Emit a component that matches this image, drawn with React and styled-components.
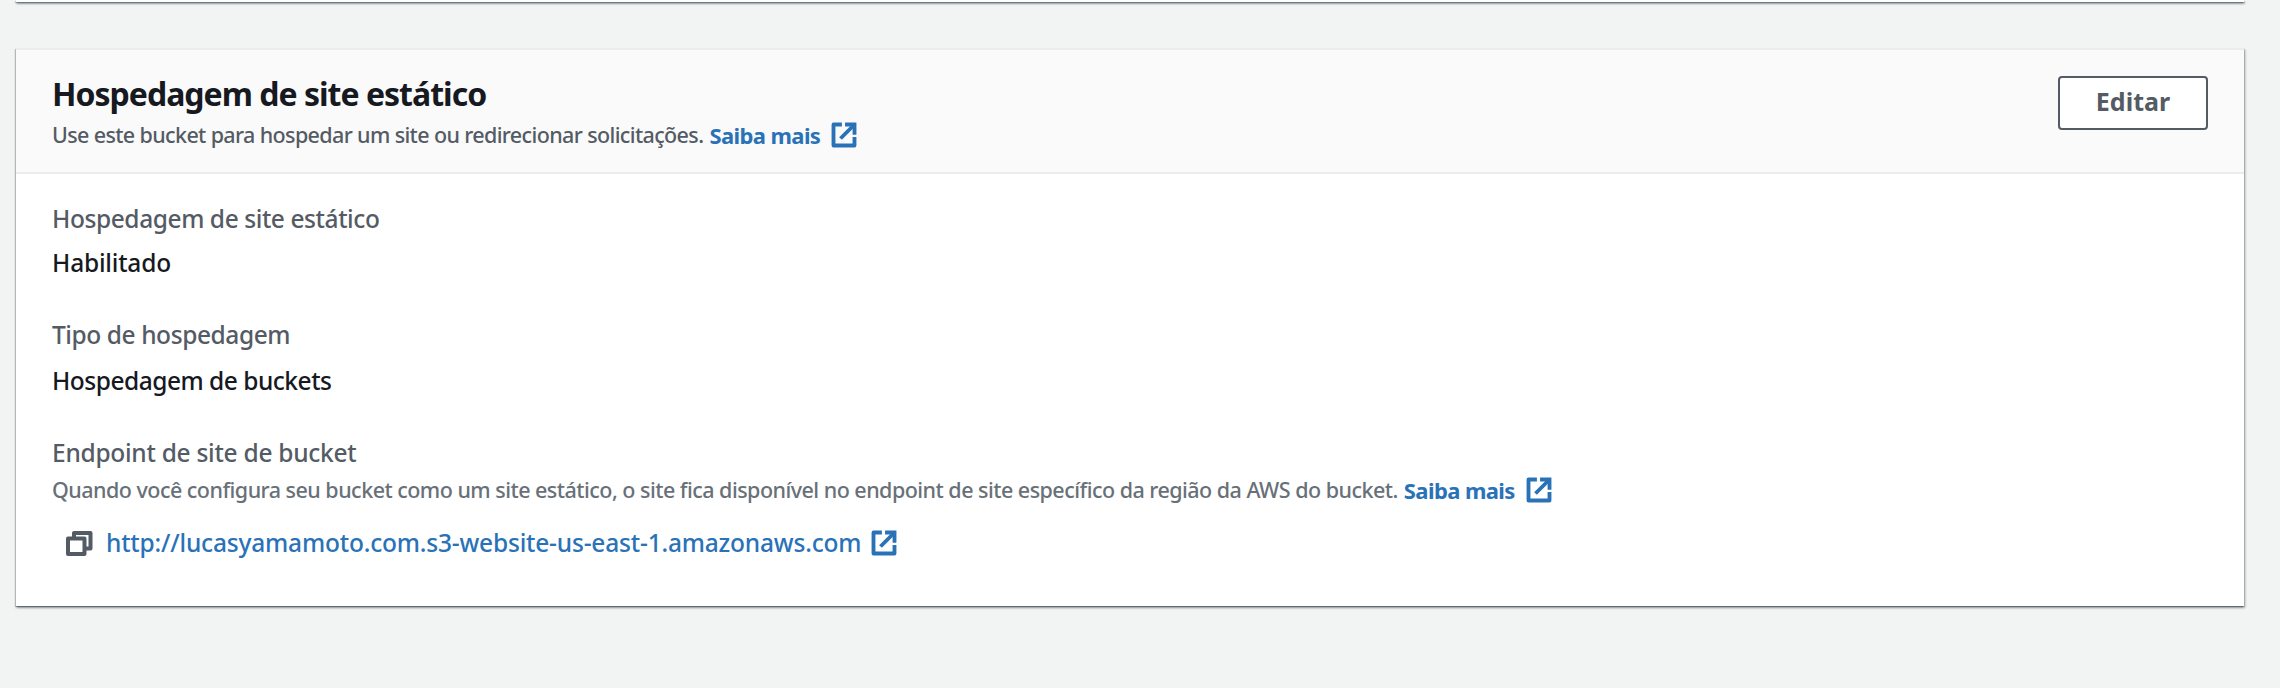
import React from 'react';
import styled, { createGlobalStyle } from 'styled-components';

const GlobalStyle = createGlobalStyle`
  * { box-sizing: border-box; }
  body {
    margin: 0;
    background: #f2f3f3;
    color: #16191f;
    font-family: "Noto Sans", sans-serif;
    font-weight: 500;
  }
`;

const Page = styled.main`
  height: 688px;
  padding: 0 36px 0 16px;
  overflow: hidden;
  display: flex;
  flex-direction: column;
`;

const Card = styled.section`
  background: #fff;
  box-shadow: 0 2px 2px 0 rgba(0, 28, 36, 0.3), 2px 2px 2px 0 rgba(0, 28, 36, 0.12),
    -1px 1px 1px 0 rgba(0, 28, 36, 0.2), 1px 1px 1px 0 rgba(0, 28, 36, 0.15),
    0 1px 0 0 rgba(0, 28, 36, 0.12);
`;

const PreviousCard = styled(Card)`
  flex: none;
  height: 2px;
  margin-bottom: 46px;
`;

const Header = styled.header`
  display: flex;
  justify-content: space-between;
  align-items: flex-start;
  height: 126px;
  padding: 24px 36px 0;
  background: #fafafa;
  border-top: 2px solid #eaeded;
  border-bottom: 2px solid #eaeded;
`;

const Title = styled.h2`
  margin: 0;
  font-size: 32px;
  line-height: 40px;
  font-weight: 700;
  letter-spacing: -0.99px;
`;

const Description = styled.p`
  display: flex;
  align-items: center;
  margin: ${p => p.$top}px 0 0;
  height: 30px;
  font-size: 21.5px;
  line-height: 30px;
  letter-spacing: ${p => p.$spacing}px;
  white-space: nowrap;
  color: ${p => p.$color};
`;

const InfoLink = styled.a`
  display: flex;
  align-items: center;
  margin-left: 6px;
  gap: 10px;
  color: #2a72b8;
  font-weight: 700;
  font-size: 22px;
  letter-spacing: -0.6px;
`;

const EditButton = styled.button`
  width: 150px;
  height: 54px;
  margin-top: 2px;
  padding: 0 0 5px;
  border: 2px solid #545b64;
  border-radius: 4px;
  background: #fff;
  color: #545b64;
  font: 700 25px/36px "Noto Sans", sans-serif;
  letter-spacing: 0;
`;

const Body = styled.div`
  display: flex;
  flex-direction: column;
  gap: 36px;
  height: 432px;
  padding: 27px 36px 0;
`;

const Field = styled.div`
  display: flex;
  flex-direction: column;
`;

const Label = styled.div`
  font-size: 24.5px;
  line-height: 36px;
  letter-spacing: ${p => p.$spacing ?? -0.42}px;
  color: #545b64;
`;

const Value = styled.div`
  margin-top: ${p => p.$top}px;
  font-size: 24.5px;
  line-height: 36px;
  letter-spacing: ${p => p.$spacing}px;
`;

const Endpoint = styled.div`
  display: flex;
  align-items: center;
  height: 36px;
  margin-top: 20px;
  padding-left: 12px;
`;

const EndpointLink = styled.a`
  display: flex;
  align-items: center;
  gap: 9px;
  margin-left: 10px;
  color: #2a72b8;
  font-size: 24.5px;
  line-height: 36px;
  letter-spacing: -0.19px;
`;

const Icon = styled.svg`
  flex: none;
  fill: none;
  stroke: currentColor;
  stroke-width: 2.2;
  stroke-linejoin: round;
`;

const CopyGlyph = styled(Icon)`
  color: #545b64;
  stroke-width: 4;
`;

const ExternalIcon = () => (
  <Icon width="28" height="28" viewBox="0 0 16 16" aria-hidden="true">
    <path d="M6.8 2H2v12h12V9.2" />
    <path d="M8.6 2H14v5.8" strokeLinejoin="miter" />
    <path d="M14 2 6 10" />
  </Icon>
);

const CopyIcon = () => (
  <CopyGlyph width="32" height="32" viewBox="0 0 32 32" aria-hidden="true">
    <path d="M4 11.5h16.5v15.5h-16.5z" />
    <path d="M10 10.5V6h16.5v15.5H22" />
  </CopyGlyph>
);

export default function App() {
  return (
    <>
      <GlobalStyle />
      <Page>
        <PreviousCard />
        <Card>
          <Header>
            <div>
              <Title>Hospedagem de site estático</Title>
              <Description $top={6} $spacing={-0.63} $color="#545b64">
                Use este bucket para hospedar um site ou redirecionar solicitações.
                <InfoLink>Saiba mais <ExternalIcon /></InfoLink>
              </Description>
            </div>
            <EditButton>Editar</EditButton>
          </Header>
          <Body>
            <Field>
              <Label>Hospedagem de site estático</Label>
              <Value $top={8} $spacing={-0.2}>Habilitado</Value>
            </Field>
            <Field>
              <Label>Tipo de hospedagem</Label>
              <Value $top={10} $spacing={-0.49}>Hospedagem de buckets</Value>
            </Field>
            <Field>
              <Label $spacing={-0.27}>Endpoint de site de bucket</Label>
              <Description $top={4} $spacing={-0.525} $color="#687078">
                Quando você configura seu bucket como um site estático, o site fica disponível no endpoint de site específico da região da AWS do bucket.
                <InfoLink>Saiba mais <ExternalIcon /></InfoLink>
              </Description>
              <Endpoint>
                <CopyIcon />
                <EndpointLink>http://lucasyamamoto.com.s3-website-us-east-1.amazonaws.com <ExternalIcon /></EndpointLink>
              </Endpoint>
            </Field>
          </Body>
        </Card>
      </Page>
    </>
  );
}
